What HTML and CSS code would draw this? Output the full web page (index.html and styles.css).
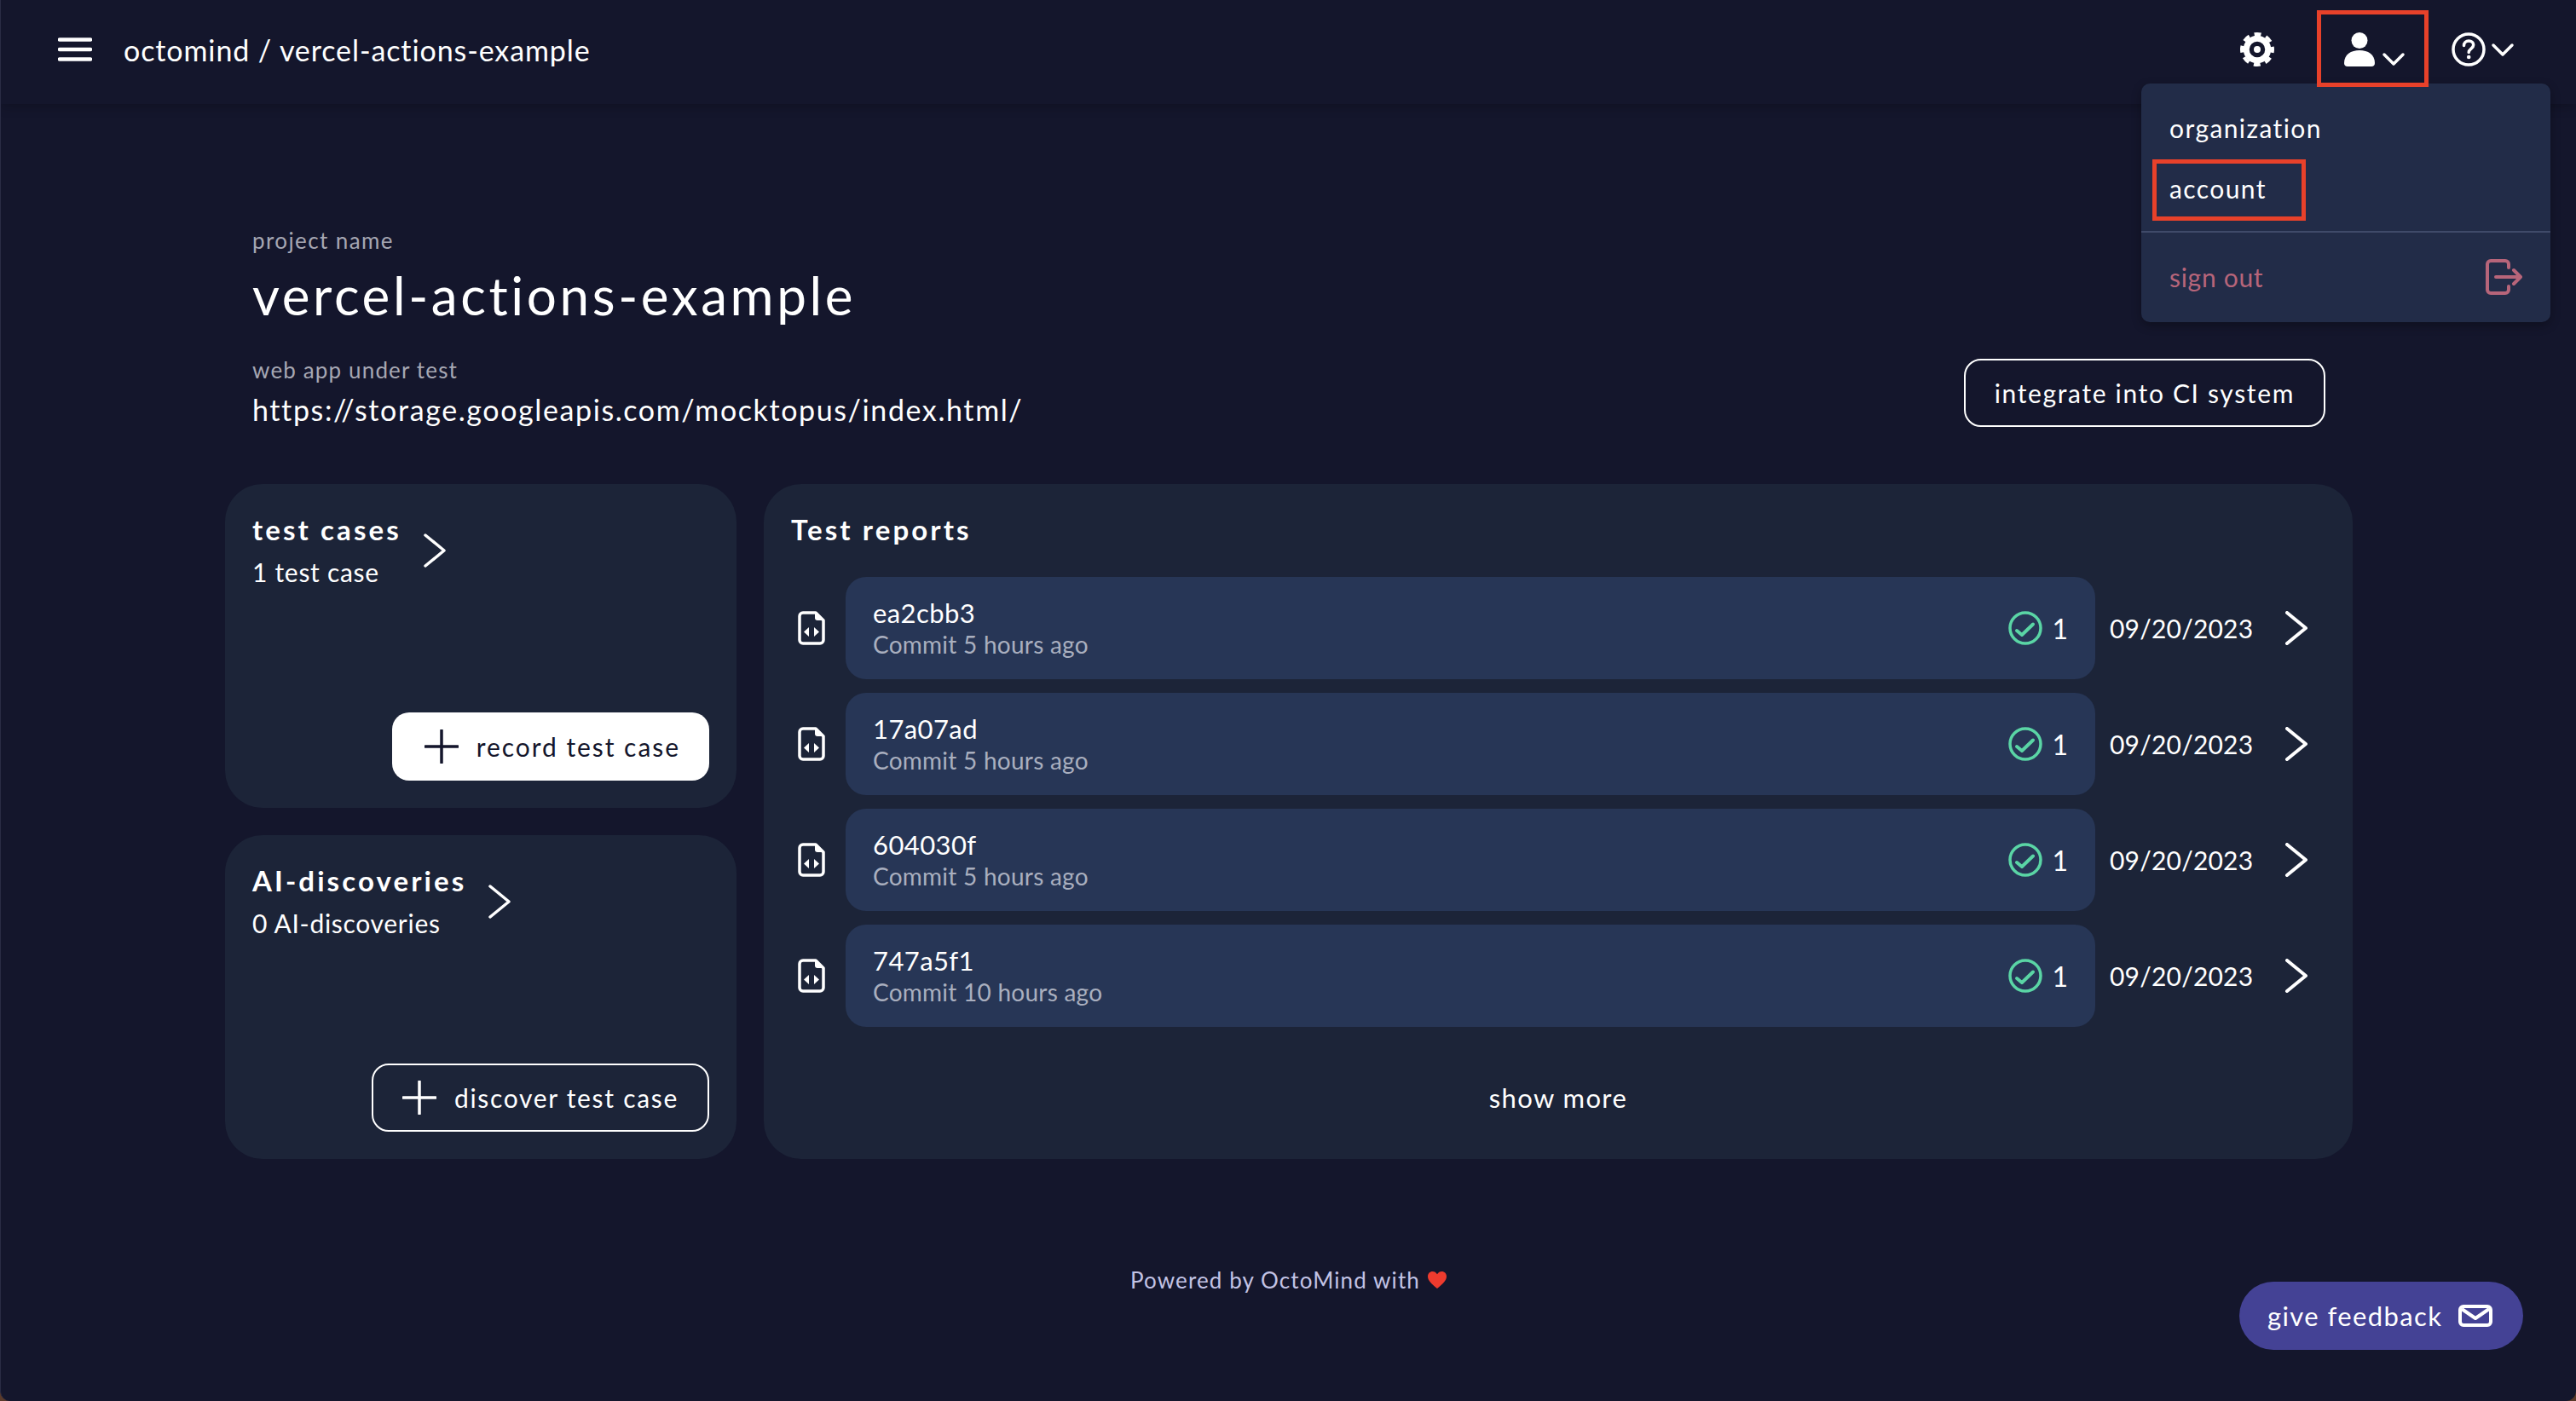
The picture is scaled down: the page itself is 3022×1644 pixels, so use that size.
FILE: index.html
```html
<!DOCTYPE html>
<html lang="en">
<head>
  <meta charset="UTF-8">
  <title>octomind</title>
  <link rel="stylesheet" href="styles.css">
</head>
<body>

  <header class="topbar">
    <svg class="burger" width="40" height="28" viewBox="0 0 40 28"><path d="M2 2.500h36M2 14h36M2 25.500h36" stroke="#fff" stroke-width="4.500" stroke-linecap="round"/></svg>
    <span class="crumb">octomind / vercel-actions-example</span>
    <div class="topbar-right">
      <svg class="gear" width="40" height="40" viewBox="0 0 40 40" fill="none" stroke="#fff">
        <circle cx="20" cy="20" r="12.750" stroke-width="7"/>
        <circle cx="20" cy="20" r="18" stroke-width="4" stroke-dasharray="8 6.140" stroke-dashoffset="4"/>
        <circle cx="20" cy="20" r="4" fill="#fff" stroke="none"/>
      </svg>
      <div class="user-btn">
        <svg width="40" height="40" viewBox="0 0 40 40" fill="#fff"><circle cx="20" cy="9.500" r="9.500"/><path d="M2 36c0-10 8-15 18-15s18 5 18 15c0 2.500-1.500 4-4 4H6c-2.500 0-4-1.500-4-4z"/></svg>
        <svg class="caret" width="28" height="18" viewBox="0 0 28 18" fill="none"><path d="M3 4l11 11L25 4" stroke="#fff" stroke-width="3.500" stroke-linecap="round" stroke-linejoin="round"/></svg>
      </div>
      <div class="help-btn">
        <svg width="40" height="40" viewBox="0 0 40 40" fill="none"><circle cx="20" cy="20" r="18" stroke="#fff" stroke-width="3.500"/><path d="M14.500 15.500c0-3.300 2.400-5.500 5.700-5.500 3.200 0 5.500 2 5.500 4.800 0 4.200-5.500 4.400-5.500 8.700" stroke="#fff" stroke-width="3.500" stroke-linecap="round"/><circle cx="20.200" cy="29" r="2.300" fill="#fff"/></svg>
        <svg class="caret" width="28" height="18" viewBox="0 0 28 18" fill="none"><path d="M3 4l11 11L25 4" stroke="#fff" stroke-width="3.500" stroke-linecap="round" stroke-linejoin="round"/></svg>
      </div>
    </div>
    <div class="menu">
      <div class="menu-top">
        <div class="menu-item">organization</div>
        <div class="menu-item menu-item-marked">account</div>
      </div>
      <div class="menu-signout">
        <span>sign out</span>
        <svg width="44" height="44" viewBox="0 0 44 44" fill="none" stroke="#b7657a" stroke-width="4" stroke-linecap="round" stroke-linejoin="round"><path d="M28 11V7a4 4 0 0 0-4-4H7a4 4 0 0 0-4 4v30a4 4 0 0 0 4 4h17a4 4 0 0 0 4-4v-4"/><path d="M13 22h29M34 14l8 8-8 8"/></svg>
      </div>
    </div>
  </header>

  <main class="page">
    <section class="project">
      <div>
        <div class="label">project name</div>
        <h1>vercel-actions-example</h1>
        <div class="label label-url">web app under test</div>
        <div class="url">https://storage.googleapis.com/mocktopus/index.html/</div>
      </div>
      <button class="btn btn-outline btn-ci">integrate into CI system</button>
    </section>

    <section class="grid">
      <div class="col">
        <div class="card card-small">
          <div class="card-head">
            <div>
              <h3>test cases</h3>
              <div class="count">1 test case</div>
            </div>
            <svg class="chev" width="40" height="40" viewBox="0 0 40 40" fill="none"><path d="M4 2l22 18L4 38" stroke="#fff" stroke-width="3.500" stroke-linecap="round" stroke-linejoin="round"/></svg>
          </div>
          <button class="btn btn-solid">
            <svg width="40" height="40" viewBox="0 0 40 40"><path d="M20 1v38M1 20h38" stroke="#14162c" stroke-width="3.500" stroke-linecap="round"/></svg>
            record test case
          </button>
        </div>
        <div class="card card-small">
          <div class="card-head">
            <div>
              <h3>AI-discoveries</h3>
              <div class="count">0 AI-discoveries</div>
            </div>
            <svg class="chev" width="40" height="40" viewBox="0 0 40 40" fill="none"><path d="M4 2l22 18L4 38" stroke="#fff" stroke-width="3.500" stroke-linecap="round" stroke-linejoin="round"/></svg>
          </div>
          <button class="btn btn-outline btn-discover">
            <svg width="40" height="40" viewBox="0 0 40 40"><path d="M20 1v38M1 20h38" stroke="#fff" stroke-width="3.500" stroke-linecap="round"/></svg>
            discover test case
          </button>
        </div>
      </div>

      <div class="card reports">
        <h3>Test reports</h3>
        <div class="report-list" id="reports"></div>
        <div class="show-more">show more</div>
      </div>
    </section>

    <footer class="powered">
      Powered by OctoMind with
      <svg width="24" height="22" viewBox="0 0 24 22"><path d="M12 21C5 15.500 1 11.500 1 6.800 1 3.400 3.500 1 6.600 1 8.800 1 10.800 2.200 12 4.300 13.200 2.200 15.200 1 17.400 1 20.500 1 23 3.400 23 6.800 23 11.500 19 15.500 12 21z" fill="#ee3b2e"/></svg>
    </footer>
  </main>

  <button class="feedback">
    give feedback
    <svg width="40" height="26" viewBox="0 0 40 26" fill="none" stroke="#fff" stroke-width="4" stroke-linejoin="round"><rect x="2" y="2" width="36" height="22" rx="4"/><path d="M4 5l16 11L36 5"/></svg>
  </button>

  <script src="app.js"></script>
</body>
</html>
```

FILE: styles.css
```css
* {
  box-sizing: border-box;
}
html {
  background-color: #5a3a2a;
}
body {
  margin: 0;
  height: 1644px;
  background-color: #14162c;
  border-left: 1px solid #2a2c44;
  border-radius: 0 0 12px 12px;
  color: #fff;
  font-family: Lato, "Noto Sans", sans-serif;
  overflow: hidden;
}
h1, h3 {
  margin: 0;
}
button {
  font-family: inherit;
  cursor: pointer;
}

/* top bar */
.topbar {
  position: relative;
  height: 122px;
  padding-left: 67px;
  display: flex;
  align-items: center;
  background-color: #14162c;
  box-shadow: 0 4px 12px rgba(0, 0, 0, 0.2);
}
.burger {
  margin-top: -6px;
}
.crumb {
  margin-left: 37px;
  margin-top: -6px;
  font-size: 34px;
  letter-spacing: 0.9px;
}
.topbar-right {
  margin-left: auto;
  margin-right: 72px;
  margin-top: -6px;
  display: flex;
  align-items: center;
}
.gear {
  margin-right: 50px;
}
.user-btn {
  position: relative;
  z-index: 1;
  width: 131px;
  height: 90px;
  margin-top: -2px;
  margin-right: 27px;
  padding: 21px 0 0 25px;
  border: 5px solid #e8412a;
  display: flex;
  align-items: flex-start;
}
.user-btn .caret {
  margin-top: 22px;
  margin-left: 6px;
}
.help-btn {
  display: flex;
  align-items: center;
}
.help-btn .caret {
  margin-left: 6px;
}
.menu {
  position: absolute;
  top: 98px;
  left: 2511px;
  width: 480px;
  height: 280px;
  background-color: #222c48;
  border-radius: 10px;
  box-shadow: 0 4px 12px rgba(0, 0, 0, 0.3);
  font-size: 30px;
  letter-spacing: 1.4px;
}
.menu-top {
  height: 175px;
  padding: 23px 0 0 13px;
  border-bottom: 2px solid #3f4a69;
}
.menu-item {
  height: 58px;
  margin-bottom: 8px;
  padding-left: 20px;
  display: flex;
  align-items: center;
}
.menu-item-marked {
  width: 180px;
  height: 72px;
  border: 5px solid #e8412a;
  padding-left: 15px;
  padding-bottom: 4px;
}
.menu-signout {
  padding: 30px 33px 0 33px;
  display: flex;
  align-items: center;
  justify-content: space-between;
  color: #b7657a;
  letter-spacing: 0.7px;
}

/* page */
.page {
  width: 2496px;
  margin-left: 263px;
}
.project {
  height: 446px;
  padding: 0 32px;
  display: flex;
  justify-content: space-between;
  align-items: flex-start;
}
.label {
  padding-top: 144px;
  font-size: 26px;
  color: #a6a7b3;
  letter-spacing: 1.4px;
  line-height: 32px;
}
.label-url {
  padding-top: 0;
  margin-top: 35px;
  letter-spacing: 1.15px;
}
h1 {
  margin-top: 11px;
  font-size: 62px;
  font-weight: 400;
  letter-spacing: 3.6px;
  line-height: 74px;
}
.url {
  margin-top: 9px;
  font-size: 34px;
  letter-spacing: 1.6px;
  line-height: 44px;
}
.btn {
  height: 80px;
  padding: 0 34px;
  border-radius: 20px;
  display: flex;
  align-items: center;
  gap: 21px;
  font-size: 30px;
  letter-spacing: 1.95px;
}
.btn-outline {
  background: none;
  border: 2px solid #fff;
  color: #fff;
}
.btn-solid {
  padding-left: 38px;
  background-color: #fff;
  border: none;
  color: #14162c;
}
.btn-discover {
  letter-spacing: 1.7px;
}
.btn-ci {
  margin-top: 299px;
  letter-spacing: 1.65px;
}

.grid {
  display: grid;
  grid-template-columns: 600px 1fr;
  gap: 32px;
  height: 792px;
}
.col {
  display: flex;
  flex-direction: column;
  gap: 32px;
}
.card {
  background-color: #1c2438;
  border-radius: 44px;
  padding: 32px;
}
.card-small {
  height: 380px;
  display: flex;
  flex-direction: column;
  justify-content: space-between;
  align-items: flex-start;
}
.card-small .btn {
  align-self: flex-end;
}
.card-head {
  display: flex;
  gap: 24px;
}
.chev {
  margin-top: 26px;
}
h3 {
  margin-top: -2px;
  font-size: 33px;
  font-weight: 700;
  letter-spacing: 3.1px;
  line-height: 46px;
}
.count {
  margin-top: 6px;
  font-size: 30px;
  letter-spacing: 0.7px;
  line-height: 42px;
}

/* reports */
.reports {
  padding-bottom: 0;
}
.report-list {
  margin-top: 33px;
  display: flex;
  flex-direction: column;
  gap: 16px;
}
.report {
  display: flex;
  align-items: center;
}
.report-file {
  margin-left: 8px;
  margin-right: 24px;
}
.report-body {
  width: 1466px;
  height: 120px;
  padding: 0 32px;
  background-color: #273656;
  border-radius: 24px;
  display: flex;
  align-items: center;
  justify-content: space-between;
}
.report-hash {
  margin-top: -2px;
  margin-bottom: 2px;
  font-size: 31px;
  letter-spacing: 0.4px;
  line-height: 38px;
}
.report-sub {
  font-size: 28px;
  letter-spacing: 0.25px;
  color: #a9afbf;
  line-height: 32px;
}
.report-pass {
  display: flex;
  align-items: center;
  gap: 11px;
  font-size: 32px;
}
.report-date {
  margin-left: 17px;
  width: 199px;
  font-size: 30px;
  letter-spacing: 0.2px;
}
.show-more {
  margin-top: 64px;
  text-align: center;
  font-size: 31px;
  letter-spacing: 1.4px;
}

.powered {
  margin-top: 126px;
  display: flex;
  justify-content: center;
  align-items: center;
  gap: 8px;
  font-size: 26px;
  letter-spacing: 1.1px;
  color: #c2c3e5;
}

.feedback {
  position: fixed;
  left: 2627px;
  top: 1504px;
  width: 333px;
  height: 80px;
  padding: 0 36px 0 33px;
  border: none;
  border-radius: 40px;
  background-color: #444295;
  color: #fff;
  display: flex;
  align-items: center;
  justify-content: space-between;
  font-size: 31px;
  letter-spacing: 1.4px;
}
```

FILE: app.js
```js
const reports = [
  { hash: "ea2cbb3", age: "Commit 5 hours ago" },
  { hash: "17a07ad", age: "Commit 5 hours ago" },
  { hash: "604030f", age: "Commit 5 hours ago" },
  { hash: "747a5f1", age: "Commit 10 hours ago" }
];

const fileIcon = `<svg class="report-file" width="32" height="40" viewBox="0 0 32 40" fill="none">
  <path d="M6 2h15l9 9v23a4 4 0 0 1-4 4H6a4 4 0 0 1-4-4V6a4 4 0 0 1 4-4z" stroke="#fff" stroke-width="3.500" stroke-linejoin="round"/>
  <path d="M20 2v6a3 3 0 0 0 3 3h7z" fill="#fff"/>
  <path d="M13 19l-6 5.500 6 5.500zM19 19l6 5.500-6 5.500z" fill="#fff"/>
</svg>`;
const checkIcon = `<svg width="40" height="40" viewBox="0 0 40 40" fill="none">
  <circle cx="20" cy="20" r="18" stroke="#5ad5a5" stroke-width="3.500"/>
  <path d="M10 23l6 5 13-12.500" stroke="#5ad5a5" stroke-width="4" stroke-linecap="round" stroke-linejoin="round"/>
</svg>`;
const chevIcon = `<svg width="40" height="40" viewBox="0 0 40 40" fill="none"><path d="M9 2l22 18L9 38" stroke="#fff" stroke-width="4" stroke-linecap="round" stroke-linejoin="round"/></svg>`;

document.getElementById("reports").innerHTML = reports.map(r => `
  <div class="report">
    ${fileIcon}
    <div class="report-body">
      <div>
        <div class="report-hash">${r.hash}</div>
        <div class="report-sub">${r.age}</div>
      </div>
      <div class="report-pass">${checkIcon}<span>1</span></div>
    </div>
    <div class="report-date">09/20/2023</div>
    ${chevIcon}
  </div>`).join("");
```
